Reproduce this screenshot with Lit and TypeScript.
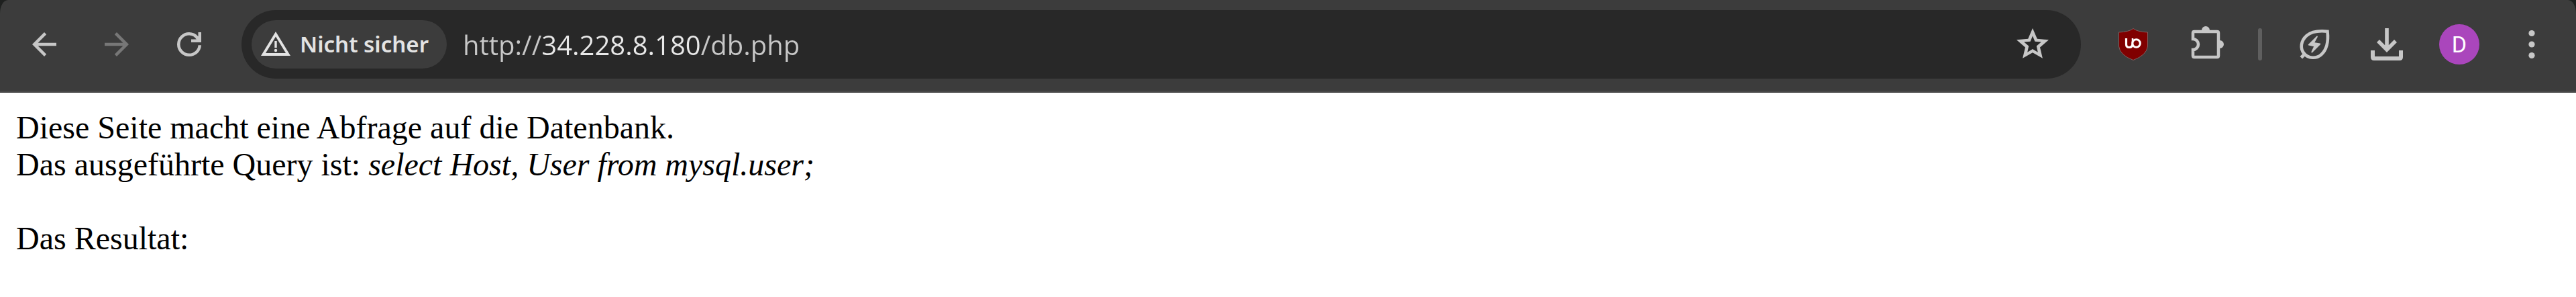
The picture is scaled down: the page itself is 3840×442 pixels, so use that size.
import { LitElement, html, css, svg } from "lit";
import { customElement, state } from "lit/decorators.js";

const icons = {
  back: svg`<path transform="scale(3)" d="M16 10.75H6.875L11.0625 14.9375 10 16 4 10 10 4 11.0625 5.0625 6.875 9.25H16Z"/>`,
  forward: svg`<path transform="scale(3)" d="M4 10.75H13.125L8.9375 14.9375 10 16 16 10 10 4 8.9375 5.0625 13.125 9.25H4Z"/>`,
  reload: svg`<path transform="scale(3)" d="M10 16q-2.5 0-4.25-1.75T4 10t1.75-4.25T10 4q1.27 0 2.4.52 1.13.52 1.93 1.4l.17.2V4H16v5h-5V7.5h2.6q-.63-.92-1.56-1.46T10 5.5q-1.875 0-3.19 1.31T5.5 10t1.31 3.19T10 14.5q1.8 0 3.1-1.2t1.4-2.9H16q-.12 2.4-1.86 4T10 16Z"/>`,
  star: svg`<path fill-rule="evenodd" d="M30 6l6.8 15.8 17.2 1.5L41 34.4l3.9 16.4L30 42.2l-14.9 8.6L19 34.4 6 23.3l17.2-1.5ZM30 17.5l-3.4 8.3-9.4.8 7 6-2 9.1 7.8-4.8 7.8 4.8-2-9.1 7-6-9.4-.8Z"/>`,
  shield: svg`<path d="M30 6.500Q36.500 11.500 51.500 12V33Q50 46 30 53.500Q10 46 8.500 33V12Q23.500 11.500 30 6.500Z" fill="#800000" stroke="#7d6060"/>
    <path d="M19.500 21V30q0 4.500 4.500 4.500 4.500 0 5-5" fill="none" stroke="#fff" stroke-width="3.200"/>
    <path d="M29 21v9" stroke="#fff" stroke-width="2.500"/>
    <circle cx="34.500" cy="28.500" r="5.800" fill="none" stroke="#fff" stroke-width="3"/>`,
  puzzle: svg`<path d="M13 11H47q2 0 2 2V47q0 2-2 2H13q-2 0-2-2V38a8 8 0 0 0 0-16V13q0-2 2-2Z" fill="none" stroke="currentColor" stroke-width="4.500"/>
    <path d="M24 10V9a6 6 0 0 1 12 0v1ZM50 24h1a6 6 0 0 1 0 12h-1Z"/>`,
  leaf: svg`<path d="M49.500 10.700C38 9.500 26 10.500 18.500 17C9.500 25 8.500 36 14.500 43.500C21 51.500 33 51.500 40 45.500C49 37.500 51 24 49.500 10.700Z" fill="none" stroke="currentColor" stroke-width="4.600"/>
    <path d="M10.300 49.700L17 43" fill="none" stroke="currentColor" stroke-width="5"/>
    <path d="M34 18.500L29 27.800L38.300 29.500L26.300 41.500L30.500 32.500L21.700 30.700Z" stroke="currentColor" stroke-width="1.800" stroke-linejoin="round"/>`,
  download: svg`<path d="M30 6V37M17 25L30 38L43 25" fill="none" stroke="currentColor" stroke-width="5.600"/>
    <path d="M9 39V49q0 2 2 2H49q2 0 2-2V39" fill="none" stroke="currentColor" stroke-width="6"/>`,
  menu: svg`<circle cx="30" cy="13.500" r="4.600"/><circle cx="30" cy="30" r="4.600"/><circle cx="30" cy="46.500" r="4.600"/>`,
};

@customElement("tool-button")
class ToolButton extends LitElement {
  static properties = {
    icon: { type: String },
    label: { type: String },
    disabled: { type: Boolean },
  };
  declare icon: keyof typeof icons;
  declare label: string;
  declare disabled: boolean;

  static styles = css`
    :host {
      display: block;
      flex: none;
    }
    .button {
      display: flex;
      align-items: center;
      justify-content: center;
      width: 102px;
      height: 102px;
      padding: 0;
      border: 0;
      border-radius: 50%;
      background: none;
      color: #c7c7c7;
    }
    .button:disabled {
      color: #777777;
    }
    .icon {
      width: 60px;
      height: 60px;
      fill: currentColor;
    }
  `;

  render() {
    return html`<button class="button" type="button" aria-label=${this.label} ?disabled=${this.disabled}>
      <svg class="icon" viewBox="0 0 60 60" aria-hidden="true">${icons[this.icon]}</svg>
    </button>`;
  }
}

@customElement("address-bar")
class AddressBar extends LitElement {
  @state() url = "http://34.228.8.180/db.php";

  static styles = css`
    :host {
      display: flex;
      flex: 1;
      min-width: 0;
      align-items: center;
      height: 102px;
      padding: 0 21px 0 15px;
      box-sizing: border-box;
      border-radius: 51px;
      background: #282828;
    }
    .chip {
      display: flex;
      flex: none;
      align-items: center;
      gap: 14px;
      height: 72px;
      padding: 0 27px 0 14px;
      border: 0;
      border-radius: 36px;
      background: #3c3c3c;
      color: #e3e3e3;
      font: 600 33px/48px "Noto Sans", "Open Sans", sans-serif;
      white-space: nowrap;
    }
    .warning {
      width: 44px;
      height: 38px;
      fill: currentColor;
    }
    .url {
      flex: 1;
      min-width: 0;
      height: 72px;
      margin-left: 24px;
      padding: 0;
      border: 0;
      outline: 0;
      font: 400 40px/60px "Open Sans", "Noto Sans", sans-serif;
      color: #e3e3e3;
      /* the host part of the address is brighter than its scheme and path */
      -webkit-text-fill-color: transparent;
      background: linear-gradient(90deg, #c7c7c7 117px, #e8e8e8 117px 355px, #c7c7c7 355px);
      -webkit-background-clip: text;
      background-clip: text;
    }
  `;

  render() {
    return html`
      <button class="chip" type="button">
        <svg class="warning" viewBox="0 0 44 38" aria-hidden="true">
          <path fill-rule="evenodd" d="M0 36L22 0L44 36ZM7 32H37L22 7.500Z" />
          <path d="M20.300 14h3.400v10h-3.400Z" />
          <circle cx="22" cy="28" r="2.200" />
        </svg>
        <span>Nicht sicher</span>
      </button>
      <input class="url" type="text" aria-label="Adresse" spellcheck="false" .value=${this.url} />
      <tool-button icon="star" label="Lesezeichen"></tool-button>
    `;
  }
}

@customElement("app-root")
class AppRoot extends LitElement {
  static styles = css`
    :host {
      display: block;
      min-height: 100vh;
      background: #ffffff;
    }
    .frame {
      background: #1e201f;
    }
    .toolbar {
      display: flex;
      align-items: center;
      gap: 27px;
      padding: 15px 15px 18px;
      border-bottom: 3px solid #474747;
      border-radius: 12px 12px 0 0 / 20px 20px 0 0;
      background: #3c3c3c;
    }
    .group {
      display: flex;
      flex: none;
      align-items: center;
      gap: 6px;
    }
    .divider {
      flex: none;
      width: 6px;
      height: 48px;
      border-radius: 3px;
      background: #5f5f5f;
    }
    .profile {
      display: flex;
      align-items: center;
      justify-content: center;
      width: 102px;
      height: 102px;
      padding: 0;
      border: 0;
      background: none;
    }
    .avatar {
      width: 60px;
      height: 60px;
      border-radius: 50%;
      background: #aa46bc;
      color: #ffffff;
      font: 400 34px/60px Roboto, sans-serif;
      text-align: center;
    }
    .page {
      padding: 24px;
      font: 48px/55px "Liberation Serif", "Times New Roman", serif;
      color: #000000;
    }
    .text {
      margin: 0;
    }
    .result {
      margin: 55px 0 0;
    }
  `;

  render() {
    return html`
      <header class="frame">
        <div class="toolbar">
          <nav class="group">
            <tool-button icon="back" label="Zurück"></tool-button>
            <tool-button icon="forward" label="Vorwärts" disabled></tool-button>
            <tool-button icon="reload" label="Neu laden"></tool-button>
          </nav>
          <address-bar></address-bar>
          <div class="group">
            <tool-button icon="shield" label="uBlock Origin"></tool-button>
            <tool-button icon="puzzle" label="Erweiterungen"></tool-button>
          </div>
          <span class="divider"></span>
          <div class="group">
            <tool-button icon="leaf" label="Energiesparmodus"></tool-button>
            <tool-button icon="download" label="Downloads"></tool-button>
            <button class="profile" type="button"><span class="avatar">D</span></button>
            <tool-button icon="menu" label="Menü"></tool-button>
          </div>
        </div>
      </header>
      <main class="page">
        <p class="text">
          Diese Seite macht eine Abfrage auf die Datenbank.<br />
          Das ausgeführte Query ist: <i>select Host, User from mysql.user;</i>
        </p>
        <p class="result">Das Resultat:</p>
      </main>
    `;
  }
}
